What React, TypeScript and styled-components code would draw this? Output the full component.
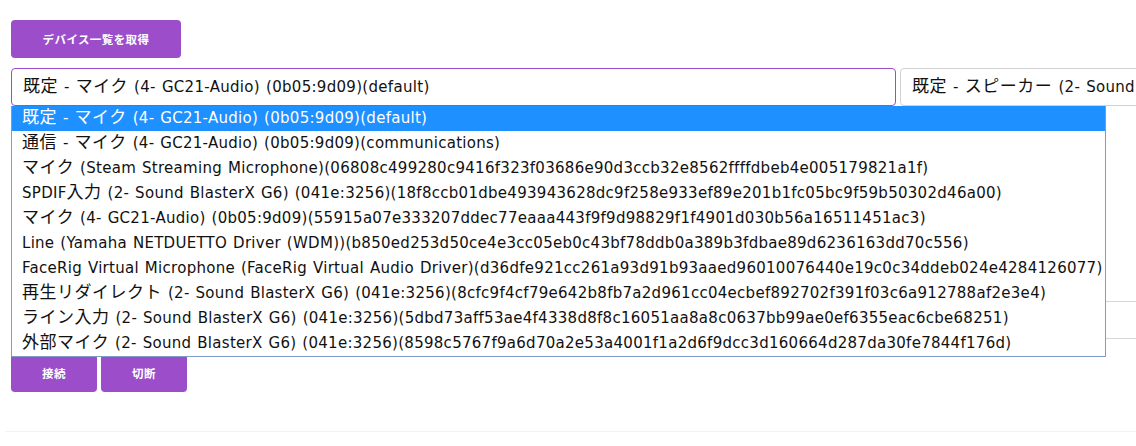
import React from "react";
import styled, { createGlobalStyle } from "styled-components";

const Global = createGlobalStyle`
  html, body { margin: 0; padding: 0; background: #fff; }
  body { font-family: "DejaVu Sans", "Noto Sans CJK JP", sans-serif; color: #111; overflow: hidden; }
  * { box-sizing: border-box; }
`;

const Page = styled.div`
  position: relative;
  width: 1136px;
  height: 446px;
  padding: 20px 0 0 11px;
  overflow: hidden;
`;

const Button = styled.button<{ $w: number }>`
  display: block;
  width: ${(p) => p.$w}px;
  height: 38px;
  margin: 0;
  padding: 0;
  border: 0;
  border-radius: 4px;
  background: #9b4dca;
  color: #fff;
  font-family: "Noto Sans CJK JP", sans-serif;
  font-size: 11.5px;
  font-weight: 700;
  letter-spacing: 0.4px;
  cursor: pointer;
`;

const SelectRow = styled.div`
  display: flex;
  gap: 4px;
  margin-top: 10px;
  white-space: nowrap;
  overflow: hidden;
  margin-right: -11px;
`;

const SelectBox = styled.div<{ $focused?: boolean }>`
  flex: none;
  width: 885px;
  height: 38px;
  line-height: 36px;
  padding: 0 11px;
  border: 1px solid ${(p) => (p.$focused ? "#9b4dca" : "#d1d1d1")};
  border-radius: 4px;
  font-size: 15px;
  letter-spacing: 0.3px;
  word-spacing: 1px;
  color: #111;
  background: #fff;
`;

const Jp = styled.span`
  font-family: "Noto Sans CJK JP", sans-serif;
  font-size: 17px;
  line-height: 1;
  letter-spacing: 0.5px;
`;

const Hidden = styled.div`
  height: 248px;
  display: flex;
  flex-direction: column;
  justify-content: flex-end;
  margin-right: -11px;
`;

const HiddenLine = styled.div`
  height: 37px;
  border-top: 1px solid #d6d6d6;
  &:last-child { height: 16px; }
`;

const ButtonRow = styled.div`
  display: flex;
  gap: 4px;
`;

const Rule = styled.hr`
  margin: 39px 0 0 -6px;
  border: 0;
  border-top: 1px solid #f1f2f3;
`;

const List = styled.ul`
  position: absolute;
  left: 11px;
  top: 106px;
  width: 1095px;
  margin: 0;
  padding: 0;
  list-style: none;
  background: #fff;
  border: 1px solid #7f9dc9;
  border-top: 0;
`;

const Option = styled.li<{ $selected?: boolean }>`
  height: 25px;
  line-height: 25px;
  padding-left: 10px;
  font-size: 15px;
  letter-spacing: 0.28px;
  word-spacing: 0.9px;
  white-space: nowrap;
  color: ${(p) => (p.$selected ? "#fff" : "#111")};
  background: ${(p) => (p.$selected ? "#1e90ff" : "transparent")};
`;

const options = [
  "既定 - マイク (4- GC21-Audio) (0b05:9d09)(default)",
  "通信 - マイク (4- GC21-Audio) (0b05:9d09)(communications)",
  "マイク (Steam Streaming Microphone)(06808c499280c9416f323f03686e90d3ccb32e8562ffffdbeb4e005179821a1f)",
  "SPDIF入力 (2- Sound BlasterX G6) (041e:3256)(18f8ccb01dbe493943628dc9f258e933ef89e201b1fc05bc9f59b50302d46a00)",
  "マイク (4- GC21-Audio) (0b05:9d09)(55915a07e333207ddec77eaaa443f9f9d98829f1f4901d030b56a16511451ac3)",
  "Line (Yamaha NETDUETTO Driver (WDM))(b850ed253d50ce4e3cc05eb0c43bf78ddb0a389b3fdbae89d6236163dd70c556)",
  "FaceRig Virtual Microphone (FaceRig Virtual Audio Driver)(d36dfe921cc261a93d91b93aaed96010076440e19c0c34ddeb024e4284126077)",
  "再生リダイレクト (2- Sound BlasterX G6) (041e:3256)(8cfc9f4cf79e642b8fb7a2d961cc04ecbef892702f391f03c6a912788af2e3e4)",
  "ライン入力 (2- Sound BlasterX G6) (041e:3256)(5dbd73aff53ae4f4338d8f8c16051aa8a8c0637bb99ae0ef6355eac6cbe68251)",
  "外部マイク (2- Sound BlasterX G6) (041e:3256)(8598c5767f9a6d70a2e53a4001f1a2d6f9dcc3d160664d287da30fe7844f176d)",
];

const CJK = /([\u3000-\u30ff\u3400-\u9fff\uff00-\uffef]+)/;

function Label({ text }: { text: string }) {
  return (
    <>
      {text.split(CJK).map((part, i) =>
        i % 2 === 1 ? <Jp key={i}>{part}</Jp> : <React.Fragment key={i}>{part}</React.Fragment>
      )}
    </>
  );
}

export default function App() {
  return (
    <Page>
      <Global />
      <Button $w={170}>デバイス一覧を取得</Button>
      <SelectRow>
        <SelectBox $focused>
          <Label text="既定 - マイク (4- GC21-Audio) (0b05:9d09)(default)" />
        </SelectBox>
        <SelectBox>
          <Label text="既定 - スピーカー (2- Sound BlasterX G6) (041e:3256)(default)" />
        </SelectBox>
      </SelectRow>
      <Hidden>
        <HiddenLine />
        <HiddenLine />
      </Hidden>
      <ButtonRow>
        <Button $w={86}>接続</Button>
        <Button $w={86}>切断</Button>
      </ButtonRow>
      <Rule />
      <List>
        {options.map((o, i) => (
          <Option key={i} $selected={i === 0}>
            <Label text={o} />
          </Option>
        ))}
      </List>
    </Page>
  );
}
